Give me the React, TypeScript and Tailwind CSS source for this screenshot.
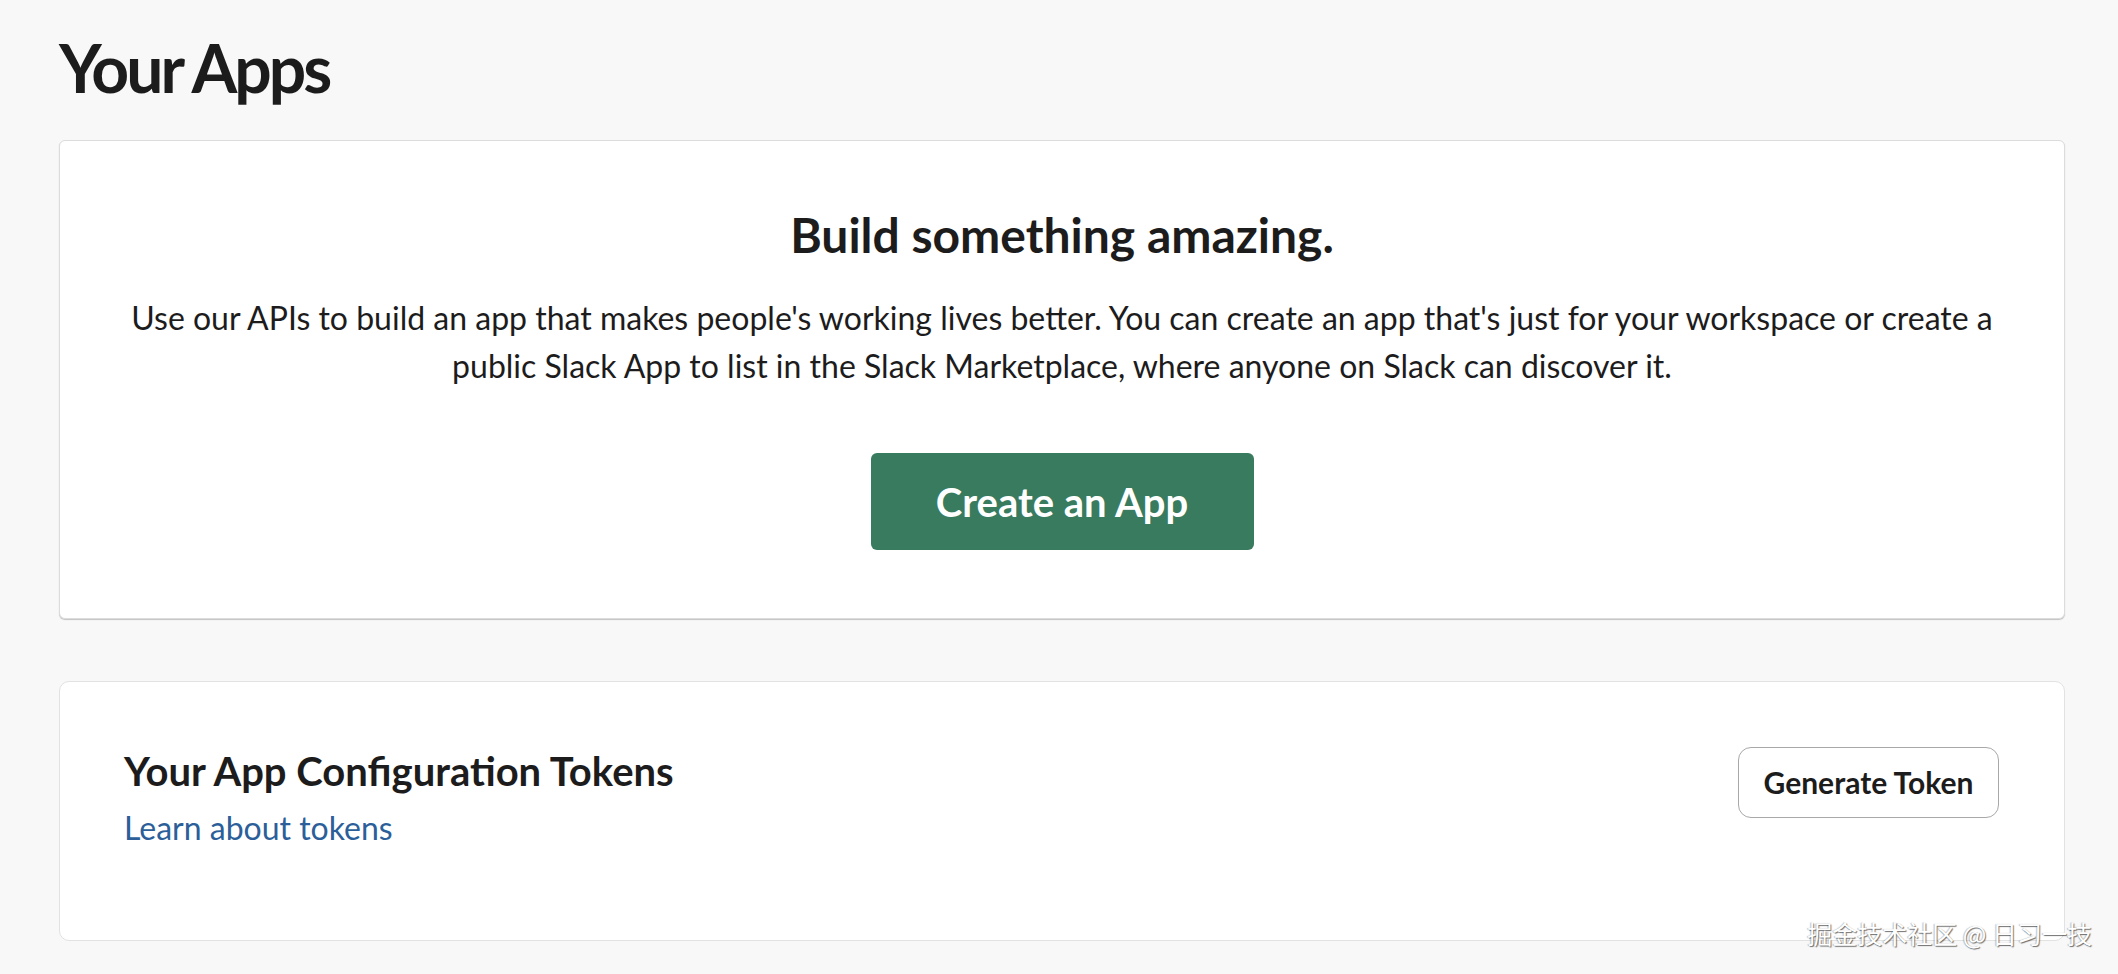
import React from "react";

export default function App() {
  return (
    <div
      className="relative min-h-screen bg-[#f8f8f8] pl-[59px] pr-[53px] pt-[35px] pb-[40px] text-[#1d1c1d]"
      style={{ fontFamily: "Lato, 'Noto Sans', sans-serif" }}
    >
      <h1 className="text-[66px] font-bold leading-[66px] tracking-[-3px]">Your Apps</h1>

      <section className="mt-[39px] rounded-[6px] border border-[#dcdcdc] bg-white px-[40px] pt-[65px] pb-[68px] text-center shadow-[0_1px_1px_rgba(0,0,0,0.22)]">
        <h2 className="text-[48px] font-bold leading-[58px]">Build something amazing.</h2>
        <p className="mx-auto mt-[30px] max-w-[1900px] text-[32px] leading-[48px]">
          Use our APIs to build an app that makes people's working lives better. You can create an app that's just for your workspace or create a public Slack App to list in the Slack Marketplace, where anyone on Slack can discover it.
        </p>
        <div className="mt-[63px] flex justify-center">
          <button className="h-[97px] w-[383px] rounded-[6px] bg-[#387b5f] text-[40px] font-bold text-white">
            Create an App
          </button>
        </div>
      </section>

      <section className="mt-[62px] flex items-start justify-between rounded-[10px] border border-[#e2e2e2] bg-white pl-[64px] pr-[65px] pt-[65px] pb-[88px]">
        <div>
          <h3 className="text-[40px] font-bold leading-[48px]">Your App Configuration Tokens</h3>
          <a className="mt-[9px] block text-[32px] leading-[48px] text-[#2c5f9a]">Learn about tokens</a>
        </div>
        <button className="h-[71px] w-[261px] rounded-[13px] border border-[#a8a8a8] bg-white text-[30px] font-bold text-[#1d1c1d]">
          Generate Token
        </button>
      </section>

      <div
        className="absolute right-[26px] top-[918px] text-[25px] leading-[30px] text-white"
        style={{
          fontFamily: "'Noto Sans CJK SC', 'Noto Sans', sans-serif",
          textShadow: "1px 1px 1px rgba(0,0,0,0.55), -1px 0 1px rgba(0,0,0,0.25)",
        }}
      >
        掘金技术社区 @ 日习一技
      </div>
    </div>
  );
}
